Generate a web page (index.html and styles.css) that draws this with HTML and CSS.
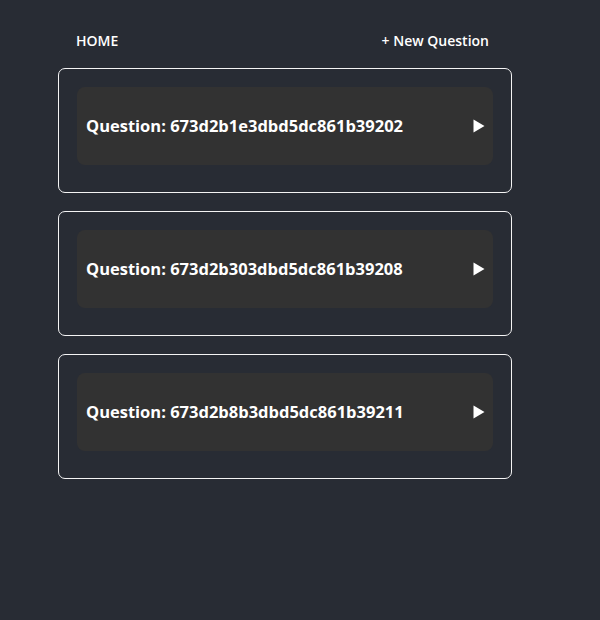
FILE: index.html
```html
<!DOCTYPE html>
<html lang="en">
<head>
<meta charset="utf-8">
<title>Questions</title>
<link rel="stylesheet" href="styles.css">
</head>
<body>
<div class="app">
  <nav class="nav">
    <a class="nav-link" href="#">HOME</a>
    <a class="nav-link" href="#">+ New Question</a>
  </nav>
  <ul class="list">
    <li class="card">
      <div class="item">
        <span class="item-title">Question: 673d2b1e3dbd5dc861b39202</span>
        <svg class="arrow" width="12" height="14" viewBox="0 0 12 14"><path d="M0.5 0.5 L11.5 7 L0.5 13.5 Z" fill="#ffffff"/></svg>
      </div>
    </li>
    <li class="card">
      <div class="item">
        <span class="item-title">Question: 673d2b303dbd5dc861b39208</span>
        <svg class="arrow" width="12" height="14" viewBox="0 0 12 14"><path d="M0.5 0.5 L11.5 7 L0.5 13.5 Z" fill="#ffffff"/></svg>
      </div>
    </li>
    <li class="card">
      <div class="item">
        <span class="item-title">Question: 673d2b8b3dbd5dc861b39211</span>
        <svg class="arrow" width="12" height="14" viewBox="0 0 12 14"><path d="M0.5 0.5 L11.5 7 L0.5 13.5 Z" fill="#ffffff"/></svg>
      </div>
    </li>
  </ul>
</div>
</body>
</html>
```
FILE: styles.css
```css
html, body {
  margin: 0;
  padding: 0;
  background: #282c34;
  min-height: 100%;
}
body {
  font-family: "Open Sans", "Noto Sans", sans-serif;
  color: #ffffff;
}
.app {
  width: 454px;
  margin-left: 58px;
}
.nav {
  display: flex;
  justify-content: space-between;
  align-items: center;
  padding: 32px 23px 0 18px;
  height: 18px;
  margin-bottom: 18px;
}
.nav-link {
  color: #ffffff;
  text-decoration: none;
  font-size: 14px;
  font-weight: 600;
  line-height: 18px;
}
.list {
  list-style: none;
  margin: 0;
  padding: 0;
  display: flex;
  flex-direction: column;
  gap: 18px;
}
.card {
  border: 1px solid #f4f4f4;
  border-radius: 7px;
  padding: 18px 18px 27px 18px;
  height: 125px;
  box-sizing: border-box;
}
.item {
  background: #323232;
  border-radius: 8px;
  height: 78px;
  display: flex;
  align-items: center;
  justify-content: space-between;
  padding: 0 8px 0 9px;
}
.item-title {
  font-size: 16.5px;
  font-weight: 700;
  line-height: 20px;
}
.arrow {
  display: block;
}
```
